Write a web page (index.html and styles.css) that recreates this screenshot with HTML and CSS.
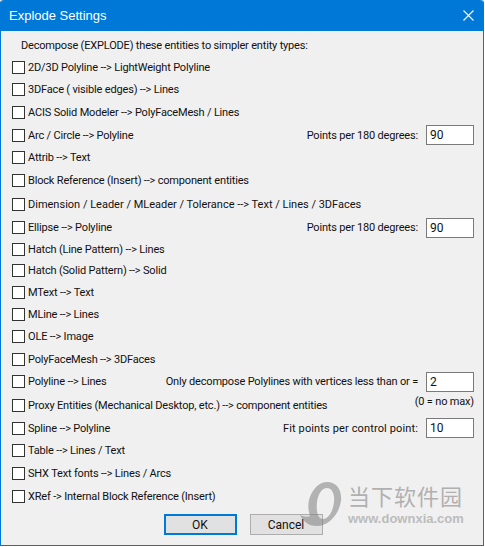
FILE: index.html
```html
<!DOCTYPE html>
<html>
<head>
  <title>Explode Settings</title>
  <link rel="stylesheet" href="styles.css">
</head>
<body>
  <div class="dialog">
    <div class="titlebar">
      <div class="title">Explode Settings</div>
      <svg class="close-icon" width="11" height="11" viewBox="0 0 11 11"><path d="M0.5 0.5L10.5 10.5M10.5 0.5L0.5 10.5" stroke="#fff" stroke-width="1.1" fill="none"/></svg>
    </div>
    <div class="content">
      <div class="heading">Decompose (EXPLODE) these entities to simpler entity types:</div>
      <div class="rows">
        <div class="row"><span class="check"></span><span class="label">2D/3D Polyline --&gt; LightWeight Polyline</span></div>
        <div class="row"><span class="check"></span><span class="label">3DFace ( visible edges) --&gt; Lines</span></div>
        <div class="row"><span class="check"></span><span class="label">ACIS Solid Modeler --&gt; PolyFaceMesh / Lines</span></div>
        <div class="row"><span class="check"></span><span class="label">Arc / Circle --&gt; Polyline</span><span class="option">Points per 180 degrees:</span><span class="field">90</span></div>
        <div class="row"><span class="check"></span><span class="label">Attrib --&gt; Text</span></div>
        <div class="row"><span class="check"></span><span class="label">Block Reference (Insert) --&gt; component entities</span></div>
        <div class="row gap"><span class="check"></span><span class="label wide">Dimension / Leader / MLeader / Tolerance --&gt; Text / Lines / 3DFaces</span></div>
        <div class="row"><span class="check"></span><span class="label">Ellipse --&gt; Polyline</span><span class="option">Points per 180 degrees:</span><span class="field">90</span></div>
        <div class="row short"><span class="check"></span><span class="label">Hatch (Line Pattern) --&gt; Lines</span></div>
        <div class="row short"><span class="check"></span><span class="label">Hatch (Solid Pattern) --&gt; Solid</span></div>
        <div class="row short"><span class="check"></span><span class="label">MText --&gt; Text</span></div>
        <div class="row"><span class="check"></span><span class="label">MLine --&gt; Lines</span></div>
        <div class="row"><span class="check"></span><span class="label">OLE --&gt; Image</span></div>
        <div class="row"><span class="check"></span><span class="label">PolyFaceMesh --&gt; 3DFaces</span></div>
        <div class="row"><span class="check"></span><span class="label">Polyline --&gt; Lines</span><span class="option">Only decompose Polylines with vertices less than or =</span><span class="field">2</span></div>
        <div class="row tall"><span class="check"></span><span class="label">Proxy Entities (Mechanical Desktop, etc.) --&gt; component entities</span><span class="note">(0 = no max)</span></div>
        <div class="row"><span class="check"></span><span class="label">Spline --&gt; Polyline</span><span class="option wide">Fit points per control point:</span><span class="field">10</span></div>
        <div class="row"><span class="check"></span><span class="label">Table --&gt; Lines / Text</span></div>
        <div class="row"><span class="check"></span><span class="label">SHX Text fonts --&gt; Lines / Arcs</span></div>
        <div class="row"><span class="check"></span><span class="label">XRef -&gt; Internal Block Reference (Insert)</span></div>
      </div>
      <div class="buttons">
        <button class="btn default">OK</button>
        <button class="btn">Cancel</button>
      </div>
    </div>
    <div class="watermark">
      <svg class="wm-logo" width="42" height="44" viewBox="0 0 42 44"><path d="M27 0C37 0 42 8 41 19C39 32 29 44 17 44C10 44 4 41 0 33C4 35 8 35 10 34C7 26 8 16 13 9C17 3 22 0 27 0ZM27 6C22 6 18 12 17 20C16 30 18 37 23 37C28 37 33 30 34 20C35 12 32 6 27 6Z" fill="#808080" fill-opacity="0.55"/></svg>
      <div class="wm-text">
        <div class="wm-cn">当下软件园</div>
        <div class="wm-url">www.downxia.com</div>
      </div>
    </div>
  </div>
</body>
</html>
```
FILE: styles.css
```css
html, body {
  margin: 0;
  padding: 0;
  background: #fff;
}

.dialog {
  position: relative;
  box-sizing: border-box;
  width: 484px;
  height: 546px;
  background: #f0f0f0;
  border: 1px solid #0078d7;
  border-top: 0;
  border-radius: 3px 3px 0 0;
  font-family: Roboto, "Liberation Sans", Arial, sans-serif;
  font-size: 11px;
  letter-spacing: -0.18px;
  color: #111;
}

.titlebar {
  display: flex;
  align-items: center;
  justify-content: space-between;
  height: 31px;
  padding: 0 9px 0 8px;
  background: #0078d7;
  border-radius: 3px 3px 0 0;
  color: #fff;
}

.title {
  font-family: "Liberation Sans", Arial, sans-serif;
  font-size: 13px;
  letter-spacing: 0;
}

.close-icon {
  display: block;
}

.content {
  padding: 7px 9px 0 11px;
}

.heading {
  height: 15px;
  line-height: 15px;
  padding-left: 9px;
}

.rows {
  margin-top: 3px;
}

.row {
  display: flex;
  align-items: center;
  height: 22.6px;
}

.row.gap {
  height: 25px;
}

.row.tall {
  height: 24px;
}

.row.short {
  height: 21.2px;
}

.check {
  box-sizing: border-box;
  flex: none;
  width: 13px;
  height: 13px;
  background: #fff;
  border: 1px solid #333;
}

.label {
  margin-left: 3px;
  white-space: nowrap;
}

.label.wide {
  letter-spacing: 0;
}

.option {
  margin-left: auto;
  margin-right: 8px;
  white-space: nowrap;
}

.option.wide {
  letter-spacing: 0.13px;
}

.note {
  align-self: flex-start;
  margin-left: auto;
  margin-top: 2px;
  white-space: nowrap;
}

.field {
  box-sizing: border-box;
  flex: none;
  width: 48px;
  height: 20px;
  line-height: 19px;
  padding-left: 3px;
  background: #fff;
  border: 1px solid #7a7a7a;
  font-size: 12px;
  letter-spacing: 0;
}

.buttons {
  display: flex;
  justify-content: center;
  gap: 13px;
  margin-top: 7px;
}

.btn {
  box-sizing: border-box;
  width: 73px;
  height: 21px;
  padding: 0;
  background: #e1e1e1;
  border: 1px solid #adadad;
  font-family: Roboto, "Liberation Sans", Arial, sans-serif;
  font-size: 12px;
  color: #111;
}

.btn.default {
  border: 2px solid #0078d7;
}

.watermark {
  position: absolute;
  left: 299px;
  top: 482px;
  display: flex;
  gap: 6px;
  letter-spacing: 0;
  pointer-events: none;
}

.wm-logo {
  display: block;
}

.wm-cn {
  font-family: "Noto Sans CJK SC", sans-serif;
  font-size: 22px;
  line-height: 26px;
  letter-spacing: 1px;
  color: #b0b0b0;
}

.wm-url {
  margin-top: 3px;
  font-family: "Liberation Sans", Arial, sans-serif;
  font-size: 13px;
  font-weight: bold;
  color: #bcbcbc;
}
```
